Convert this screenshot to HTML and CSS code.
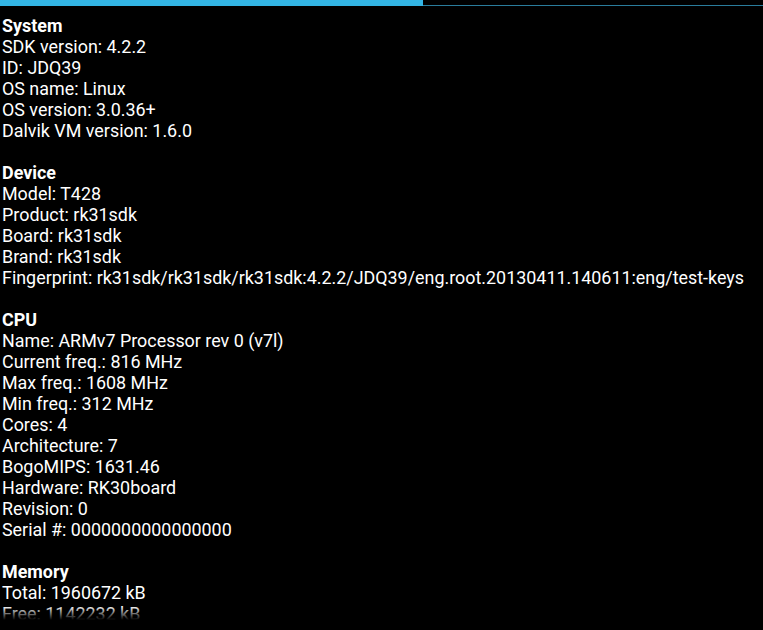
FILE: index.html
```html
<!DOCTYPE html>
<html>
<head>
<meta charset="utf-8">
<link rel="stylesheet" href="styles.css">
</head>
<body>
<div class="screen">
  <div class="tabbar">
    <div class="tab-active"></div>
    <div class="tab-rest"></div>
  </div>
  <div class="content">
    <section class="group">
      <div class="head">System</div>
      <div class="row">SDK version: 4.2.2</div>
      <div class="row">ID: JDQ39</div>
      <div class="row">OS name: Linux</div>
      <div class="row">OS version: 3.0.36+</div>
      <div class="row">Dalvik VM version: 1.6.0</div>
    </section>
    <section class="group">
      <div class="head">Device</div>
      <div class="row">Model: T428</div>
      <div class="row">Product: rk31sdk</div>
      <div class="row">Board: rk31sdk</div>
      <div class="row">Brand: rk31sdk</div>
      <div class="row">Fingerprint: rk31sdk/rk31sdk/rk31sdk:4.2.2/JDQ39/eng.root.20130411.140611:eng/test-keys</div>
    </section>
    <section class="group">
      <div class="head">CPU</div>
      <div class="row">Name: ARMv7 Processor rev 0 (v7l)</div>
      <div class="row">Current freq.: 816 MHz</div>
      <div class="row">Max freq.: 1608 MHz</div>
      <div class="row">Min freq.: 312 MHz</div>
      <div class="row">Cores: 4</div>
      <div class="row">Architecture: 7</div>
      <div class="row">BogoMIPS: 1631.46</div>
      <div class="row">Hardware: RK30board</div>
      <div class="row">Revision: 0</div>
      <div class="row">Serial #: 0000000000000000</div>
    </section>
    <section class="group">
      <div class="head">Memory</div>
      <div class="row">Total: 1960672 kB</div>
      <div class="row">Free: 1142232 kB</div>
    </section>
  </div>
  <div class="fade"></div>
</div>
</body>
</html>
```

FILE: styles.css
```css
html, body {
  margin: 0;
  padding: 0;
  background: #000;
}
.screen {
  position: relative;
  width: 763px;
  height: 630px;
  overflow: hidden;
  background: #000;
  font-family: Roboto, "Noto Sans", sans-serif;
  color: #fff;
}
.tabbar {
  display: flex;
  align-items: flex-start;
  height: 6px;
}
.tab-active {
  width: 423px;
  height: 6px;
  background: #33b5e5;
}
.tab-rest {
  flex: 1;
  height: 1px;
  margin-top: 5px;
  background: #2a7c9c;
}
.content {
  padding: 9px 0 0 2px;
  font-size: 17.9px;
  line-height: 21px;
  white-space: nowrap;
}
.group {
  margin-bottom: 21px;
}
.head {
  font-weight: bold;
}
.fade {
  position: absolute;
  left: 0;
  right: 0;
  bottom: 0;
  height: 24px;
  background: linear-gradient(to bottom, rgba(0,0,0,0), #000 58%);
}
```
